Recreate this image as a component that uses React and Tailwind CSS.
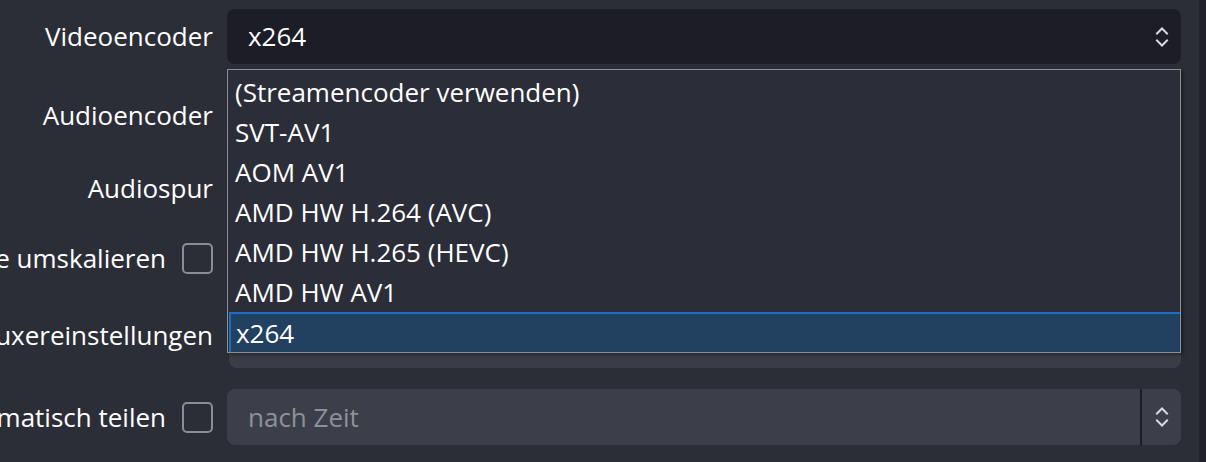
const encoders = [
  '(Streamencoder verwenden)',
  'SVT-AV1',
  'AOM AV1',
  'AMD HW H.264 (AVC)',
  'AMD HW H.265 (HEVC)',
  'AMD HW AV1',
  'x264',
];

const Chevrons = () => (
  <svg width="14" height="24" viewBox="0 0 14 24" fill="none" stroke="#d9dadd" strokeWidth="2" strokeLinecap="square">
    <path d="M2 8.5 L7 3.5 L12 8.5" />
    <path d="M2 15.5 L7 20.5 L12 15.5" />
  </svg>
);

const Checkbox = () => (
  <div className="ml-4 w-[31px] h-[31px] shrink-0 rounded-[5px] border-2 border-[#8c8d91]" />
);

const Label = ({ children, checkbox, className = '' }) => (
  <div className={`w-[213px] shrink-0 flex justify-end items-center overflow-hidden ${className}`}>
    <span className="whitespace-nowrap">{children}</span>
    {checkbox && <Checkbox />}
  </div>
);

const App = () => {
  return (
    <div
      className="relative w-[1206px] h-[462px] flex bg-[#2b2d37] text-white text-[26px] overflow-hidden"
      style={{ fontFamily: '"Open Sans", "Noto Sans", sans-serif' }}
    >
      <div className="flex-1 pt-[9px] pr-[18px]">
        <div className="flex h-[55px] items-center gap-[14px]">
          <Label>Videoencoder</Label>
          <div className="flex-1 h-full rounded-lg bg-[#1c1d26] flex items-center pl-[21px] pr-[12px]">
            <span className="flex-1">x264</span>
            <Chevrons />
          </div>
        </div>

        <div className="mt-[23px] flex h-[56px] items-center gap-[14px]">
          <Label>Audioencoder</Label>
          <div className="flex-1 h-full rounded-lg bg-[#1c1d26]" />
        </div>

        <div className="mt-[17px] flex h-[56px] items-center gap-[14px]">
          <Label>Audiospur</Label>
          <div className="flex-1 h-full rounded-lg bg-[#1c1d26]" />
        </div>

        <div className="mt-[14px] flex h-[56px] items-center gap-[14px]">
          <Label checkbox>Ausgabe umskalieren</Label>
          <div className="flex-1 h-full rounded-lg bg-[#3a3d48]" />
        </div>

        <div className="mt-[26px] flex h-[56px] items-center gap-[14px]">
          <Label className="mb-[10px]">Benutzerdefinierte Muxereinstellungen</Label>
          <div className="flex-1 h-full ml-[2px] rounded-lg bg-[#3a3d48]" />
        </div>

        <div className="mt-[21px] flex h-[56px] items-center gap-[14px]">
          <Label checkbox>Automatisch teilen</Label>
          <div className="flex-1 h-full rounded-lg bg-[#3c3f4a] flex items-center">
            <span className="flex-1 pl-[21px] text-[#8f9198]">nach Zeit</span>
            <div className="w-[2px] h-full bg-[#1c1d24]" />
            <div className="w-[39px] flex justify-center">
              <Chevrons />
            </div>
          </div>
        </div>
      </div>
      <div className="w-[7px] bg-[#1f2029]" />

      <div className="absolute left-[227px] top-[69px] w-[954px] h-[284px] border border-[#8e8f95] bg-[#2b2d38] pt-[2px] shadow-[2px_2px_3px_rgba(0,0,0,0.35)]">
        {encoders.map((name, i) =>
          i === encoders.length - 1 ? (
            <div
              key={name}
              className="h-[40px] ml-[1px] flex items-center pl-[5px] bg-[#22405f] border-t-2 border-l-2 border-[#1b6fc4]"
            >
              {name}
            </div>
          ) : (
            <div key={name} className="h-[40px] flex items-center pl-[7px]">
              {name}
            </div>
          )
        )}
      </div>
    </div>
  );
};

export default App;
